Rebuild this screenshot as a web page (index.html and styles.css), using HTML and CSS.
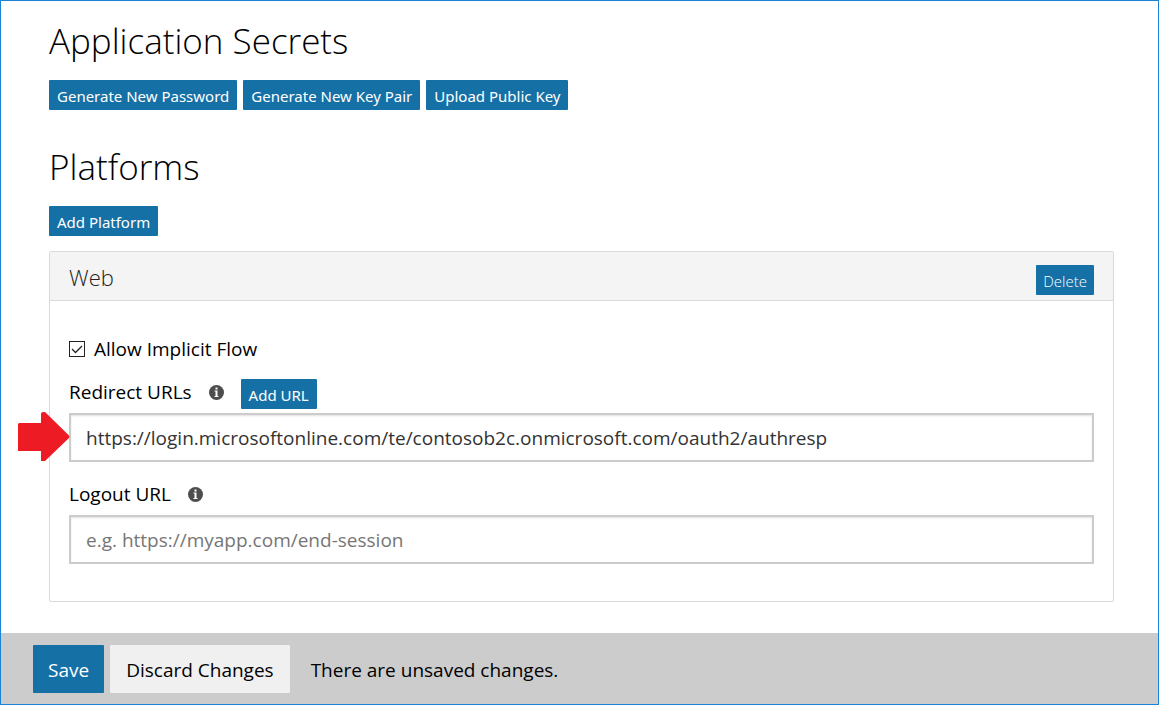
FILE: index.html
```html
<!DOCTYPE html>
<html lang="en">
<head>
<meta charset="utf-8">
<meta name="viewport" content="width=device-width, initial-scale=1">
<title>Application Secrets</title>
<link rel="stylesheet" href="styles.css">
</head>
<body>
<form class="page">
  <main class="content">
    <section class="section">
      <h1 class="heading">Application Secrets</h1>
      <div class="actions">
        <button class="btn" type="button">Generate New Password</button>
        <button class="btn" type="button">Generate New Key Pair</button>
        <button class="btn" type="button">Upload Public Key</button>
      </div>
    </section>
    <section class="section">
      <h1 class="heading">Platforms</h1>
      <div class="actions">
        <button class="btn" type="button">Add Platform</button>
      </div>
    </section>
    <section class="panel">
      <header class="panel-header">
        <h2 class="panel-title">Web</h2>
        <button class="btn btn-light" type="button">Delete</button>
      </header>
      <div class="panel-body">
        <div class="check-row">
          <input class="check" type="checkbox" id="implicit" checked>
          <label for="implicit">Allow Implicit Flow</label>
        </div>
        <div class="label-row">
          <label for="redirect">Redirect URLs</label>
          <svg class="info" viewBox="0 0 15 15" aria-hidden="true"><circle cx="7.500" cy="7.500" r="7.500" fill="#4d4d4d"/><path d="M6.500 2.500h2v2h-2zM5.500 5.500h3v5.500h1v1h-4v-1h1v-4.500h-1z" fill="#fff"/></svg>
          <button class="btn" type="button">Add URL</button>
        </div>
        <div class="field">
          <input class="text" type="text" id="redirect" value="https://login.microsoftonline.com/te/contosob2c.onmicrosoft.com/oauth2/authresp">
          <svg class="arrow" viewBox="0 0 52 50" aria-hidden="true"><path d="M1 11H23V2Q23 0 25 0H27L51 23.500Q52 25 51 26L27 49H23V39H0V12Z" fill="#ed1c24"/></svg>
        </div>
        <div class="label-row label-row-logout">
          <label for="logout">Logout URL</label>
          <svg class="info" viewBox="0 0 15 15" aria-hidden="true"><circle cx="7.500" cy="7.500" r="7.500" fill="#4d4d4d"/><path d="M6.500 2.500h2v2h-2zM5.500 5.500h3v5.500h1v1h-4v-1h1v-4.500h-1z" fill="#fff"/></svg>
        </div>
        <div class="field">
          <input class="text" type="text" id="logout" placeholder="e.g. https://myapp.com/end-session">
        </div>
      </div>
    </section>
  </main>
  <footer class="footer">
    <button class="btn-large" type="button">Save</button>
    <button class="btn-large btn-plain" type="button">Discard Changes</button>
    <p class="status">There are unsaved changes.</p>
  </footer>
</form>
</body>
</html>
```
FILE: styles.css
```css
* {
  box-sizing: border-box;
}

body {
  margin: 0;
  background: #fff;
  color: #000;
  font-family: "Open Sans", "Noto Sans", sans-serif;
  font-size: 19px;
  line-height: 28px;
}

.page {
  display: flex;
  flex-direction: column;
  min-height: 100vh;
  border: 1px solid #1883d7;
}

.content {
  flex: 1;
  padding: 15px 44px 31px 48px;
}

.section {
  padding-bottom: 32px;
}

.section + .section {
  padding-bottom: 15px;
}

.heading {
  margin: 0 0 14px;
  font-size: 35px;
  font-weight: 300;
  line-height: 50px;
}

.actions {
  display: flex;
  flex-wrap: wrap;
  gap: 6px;
}

.btn {
  height: 30px;
  padding: 2px 8px 0;
  border: 0;
  border-radius: 1px;
  background: #1570a6;
  color: #fff;
  font-family: "Noto Sans", "Open Sans", sans-serif;
  font-size: 15px;
  line-height: 28px;
  white-space: nowrap;
}

.btn-light {
  padding: 1px 7px 0;
  font-family: inherit;
  font-weight: 300;
}

.panel {
  border: 1px solid #dadada;
  border-radius: 2px;
}

.panel-header {
  display: flex;
  align-items: flex-start;
  justify-content: space-between;
  padding: 13px 19px 5px;
  border-bottom: 1px solid #dadada;
  background: #f4f4f4;
}

.panel-title {
  margin: 0;
  color: #222;
  font-size: 22px;
  font-weight: 300;
  line-height: 24px;
}

.panel-body {
  padding: 34px 19px 37px;
}

.check-row {
  display: flex;
  align-items: center;
  gap: 9px;
  margin-bottom: 16px;
}

.check {
  width: 16px;
  height: 16px;
  margin: 0;
  border: 1px solid #222;
  background: #fff url("data:image/svg+xml,%3Csvg xmlns='http://www.w3.org/2000/svg' viewBox='0 0 14 14'%3E%3Cpath d='M2 7l3.500 3.500L12 4' fill='none' stroke='%23222' stroke-width='1.300'/%3E%3C/svg%3E") center / 14px 14px no-repeat;
  appearance: none;
}

.check:not(:checked) {
  background-image: none;
}

.label-row {
  display: flex;
  align-items: center;
  gap: 17px;
  height: 30px;
  margin-bottom: 4px;
}

.label-row label {
  line-height: 26px;
  padding-bottom: 4px;
}

.label-row-logout {
  margin: 19px 0 4px;
}

.info {
  width: 15px;
  height: 15px;
  margin-bottom: 3px;
}

.field {
  position: relative;
}

.text {
  display: block;
  width: 100%;
  height: 49px;
  padding: 1px 15px 0;
  border: 2px solid #ccc;
  border-radius: 0;
  background: #fff;
  box-shadow: inset 0 1px 2px rgba(0, 0, 0, 0.12);
  color: #333;
  font-family: inherit;
  font-size: 19px;
}

.text::placeholder {
  color: #767676;
  opacity: 1;
}

.arrow {
  position: absolute;
  top: -1px;
  left: -51px;
  width: 52px;
  height: 50px;
}

.footer {
  display: flex;
  flex-wrap: wrap;
  align-items: center;
  gap: 6px;
  padding: 12px 32px 11px;
  background: #ccc;
}

.btn-large {
  height: 48px;
  padding: 2px 15px 0;
  border: 0;
  border-radius: 1px;
  background: #1570a6;
  color: #fff;
  font-family: inherit;
  font-size: 19px;
}

.btn-plain {
  padding: 2px 16px 0;
  background: #f0f0f0;
  color: #000;
}

.status {
  margin: 0;
  padding: 2px 0 0 15px;
}
```
